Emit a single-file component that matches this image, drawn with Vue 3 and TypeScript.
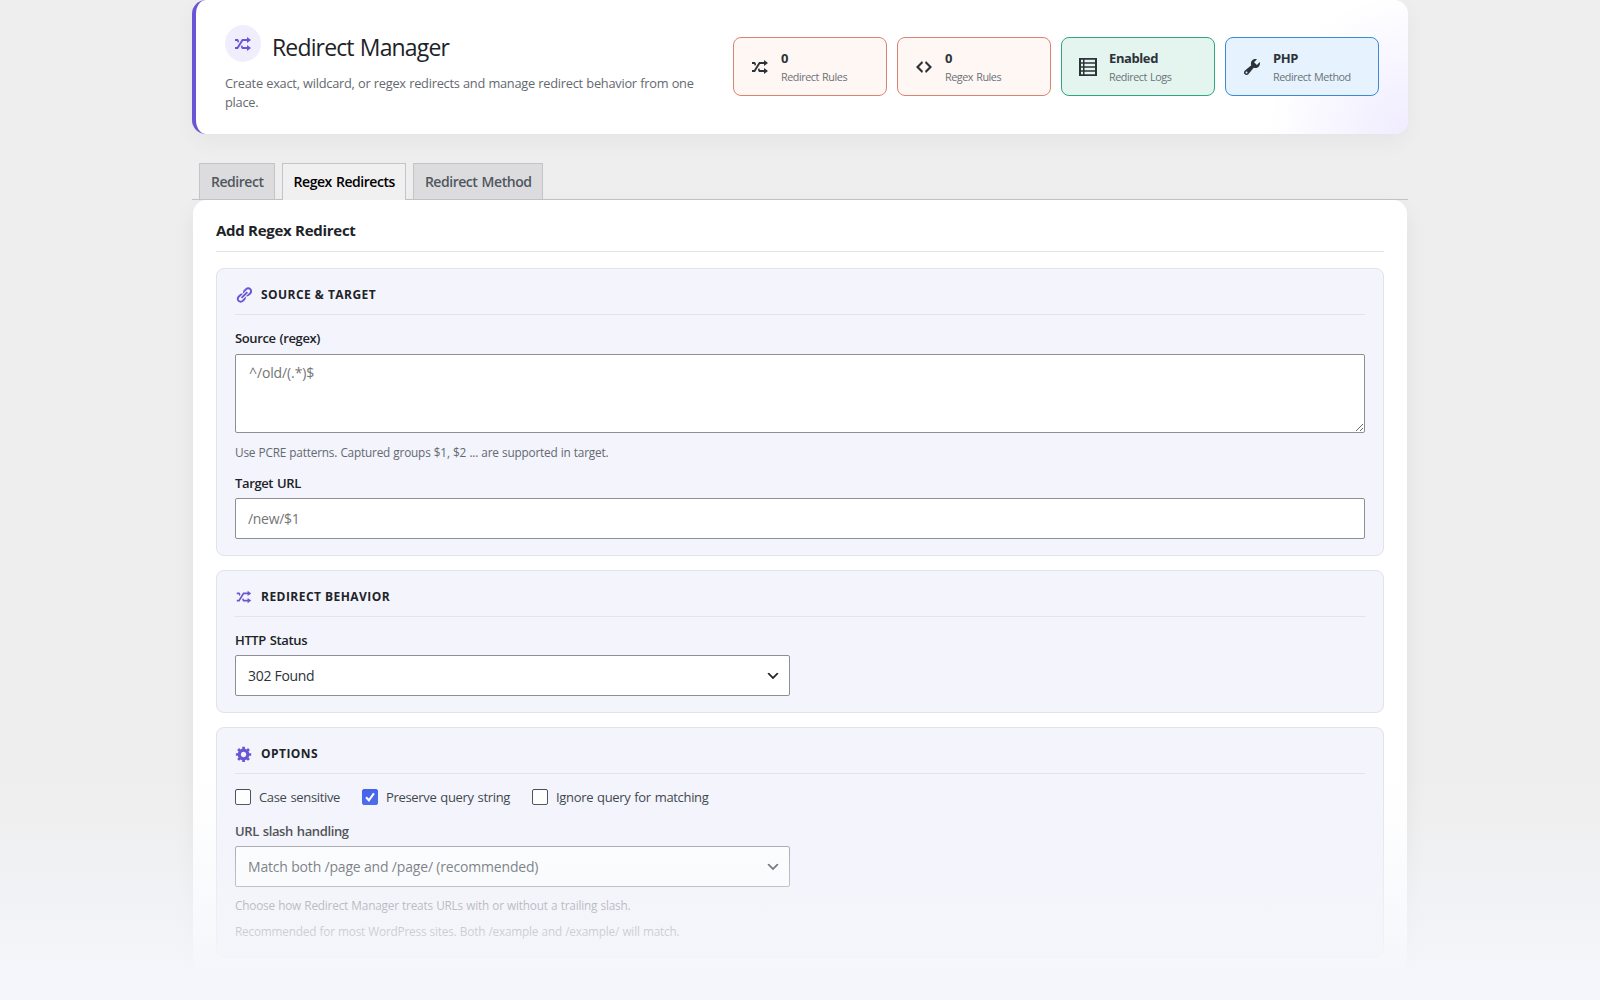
<script setup lang="ts">
import { ref } from 'vue'

const icons = {
  shuffle: 'M18 6.01L14 9V7h-4l-5 8H2v-2h2l5-8h5V3zM2 5h3l1.15 2.17-1.12 1.8L4 7H2V5zm16 9.01L14 17v-2H9l-1.15-2.17 1.12-1.8L10 13h4v-2z',
  code: 'M9 6l-4 4 4 4-1 2-6-6 6-6zm2 8l4-4-4-4 1-2 6 6-6 6z',
  list: 'M1 1h18v18H1zM3 2.8v2.400h2V2.800zm3.500 0v2.400H17V2.800zM3 6.800v2.400h2V6.800zm3.500 0v2.400H17V6.800zM3 10.800v2.400h2v-2.400zm3.500 0v2.400H17v-2.400zM3 14.800v2.400h2v-2.400zm3.500 0v2.400H17v-2.400z',
  wrench: 'M16.68 9.77c-1.34 1.34-3.3 1.67-4.95.99l-5.41 6.52c-.99.99-2.59.99-3.58 0s-.99-2.59 0-3.57l6.52-5.42c-.68-1.65-.35-3.61.99-4.95 1.28-1.28 3.12-1.62 4.72-1.06l-2.89 2.89 2.82 2.82 2.86-2.87c.53 1.58.18 3.39-1.08 4.65zM3.81 16.21c.4.39 1.04.39 1.43 0 .4-.4.4-1.04 0-1.43-.39-.4-1.03-.4-1.43 0-.39.39-.39 1.03 0 1.43z',
  link: 'M17.74 2.76c1.68 1.69 1.68 4.41 0 6.1l-1.53 1.52c-1.12 1.12-2.7 1.47-4.14 1.09l2.62-2.61.76-.77.76-.76c.84-.84.84-2.2 0-3.04-.84-.85-2.2-.85-3.04 0l-.77.76-3.38 3.38c-.37-1.44-.02-3.02 1.1-4.14l1.52-1.53c1.69-1.68 4.42-1.68 6.1 0zM8.59 13.43l5.34-5.34c.42-.42.42-1.1 0-1.52-.44-.43-1.13-.39-1.53 0l-5.33 5.34c-.42.42-.42 1.1 0 1.52.44.43 1.13.39 1.52 0zm-.76 2.29l4.14-4.15c.38 1.44.03 3.02-1.09 4.14l-1.52 1.53c-1.69 1.68-4.41 1.68-6.1 0-1.68-1.68-1.68-4.42 0-6.1l1.53-1.52c1.12-1.12 2.7-1.47 4.14-1.1l-4.14 4.15c-.85.84-.85 2.2 0 3.05.84.84 2.2.84 3.04 0z',
  gear: 'M18 12h-2.18c-.17.7-.44 1.35-.81 1.93l1.54 1.54-2.1 2.1-1.54-1.54c-.58.36-1.23.63-1.91.79V19H8v-2.18c-.68-.16-1.33-.43-1.91-.79l-1.54 1.54-2.12-2.12 1.54-1.54c-.36-.58-.63-1.23-.79-1.91H1V9.03h2.17c.16-.7.44-1.35.8-1.94L2.43 5.55l2.1-2.1 1.54 1.54c.58-.37 1.24-.64 1.93-.81V2h3v2.18c.68.16 1.33.43 1.91.79l1.54-1.54 2.12 2.12-1.54 1.54c.36.59.64 1.24.8 1.94H18V12zm-8.5 1.5c1.66 0 3-1.34 3-3s-1.34-3-3-3-3 1.34-3 3 1.34 3 3 3z',
  chevron: 'M5 6l5 5 5-5 2 1-7 7-7-7 2-1z',
}

const stats = [
  { icon: icons.shuffle, value: '0', label: 'Redirect Rules', tone: 'coral' },
  { icon: icons.code, value: '0', label: 'Regex Rules', tone: 'coral' },
  { icon: icons.list, value: 'Enabled', label: 'Redirect Logs', tone: 'green' },
  { icon: icons.wrench, value: 'PHP', label: 'Redirect Method', tone: 'blue' },
]

const tabs = ['Redirect', 'Regex Redirects', 'Redirect Method']
const activeTab = ref(1)

const options = ref([
  { label: 'Case sensitive', checked: false },
  { label: 'Preserve query string', checked: true },
  { label: 'Ignore query for matching', checked: false },
])
</script>

<template>
  <div class="page">
    <header class="hero">
      <div class="intro">
        <div class="title-row">
          <span class="badge"><svg viewBox="0 0 20 20"><path :d="icons.shuffle" /></svg></span>
          <h1>Redirect Manager</h1>
        </div>
        <p>Create exact, wildcard, or regex redirects and manage redirect behavior from one place.</p>
      </div>
      <div class="stats">
        <div v-for="s in stats" :key="s.label" class="stat" :class="s.tone">
          <svg viewBox="0 0 20 20"><path fill-rule="evenodd" :d="s.icon" /></svg>
          <div>
            <strong>{{ s.value }}</strong>
            <span>{{ s.label }}</span>
          </div>
        </div>
      </div>
    </header>

    <nav class="tabs">
      <a v-for="(t, i) in tabs" :key="t" :class="{ active: i === activeTab }" @click="activeTab = i">{{ t }}</a>
    </nav>

    <main class="panel">
      <h2>Add Regex Redirect</h2>

      <section class="group">
        <h3><svg viewBox="0 0 20 20"><path :d="icons.link" /></svg><span>SOURCE &amp; TARGET</span></h3>
        <label class="field-label source">Source (regex)</label>
        <textarea placeholder="^/old/(.*)$"></textarea>
        <p class="help pattern">Use PCRE patterns. Captured groups $1, $2 ... are supported in target.</p>
        <label class="field-label target">Target URL</label>
        <input class="text" type="text" placeholder="/new/$1" />
      </section>

      <section class="group">
        <h3><svg viewBox="0 0 20 20"><path :d="icons.shuffle" /></svg><span>REDIRECT BEHAVIOR</span></h3>
        <label class="field-label">HTTP Status</label>
        <div class="select">
          <span>302 Found</span>
          <svg viewBox="0 0 20 20"><path :d="icons.chevron" /></svg>
        </div>
      </section>

      <section class="group">
        <h3><svg viewBox="0 0 20 20"><path :d="icons.gear" /></svg><span>OPTIONS</span></h3>
        <div class="checks">
          <label v-for="o in options" :key="o.label" @click="o.checked = !o.checked">
            <span class="box" :class="{ on: o.checked }">
              <svg v-if="o.checked" viewBox="0 0 16 16"><path d="M3.5 8.3l3.200 3.500 5.800-8" /></svg>
            </span>
            <span>{{ o.label }}</span>
          </label>
        </div>
        <label class="field-label slash">URL slash handling</label>
        <div class="select">
          <span class="long">Match both /page and /page/ (recommended)</span>
          <svg viewBox="0 0 20 20"><path :d="icons.chevron" /></svg>
        </div>
        <p class="help">Choose how Redirect Manager treats URLs with or without a trailing slash.</p>
        <p class="help second">Recommended for most WordPress sites. Both /example and /example/ will match.</p>
      </section>
    </main>
    <div class="fade"></div>
  </div>
</template>

<style>
body {
  background: #eee;
  overflow: hidden;
}
</style>

<style scoped>
* {
  box-sizing: border-box;
}
.page {
  position: relative;
  height: 1000px;
  overflow: hidden;
  padding: 0 192px;
  background: #eee;
  color: #1d2327;
  font: 13px/20px "Open Sans", "Noto Sans", sans-serif;
}
svg {
  display: block;
  fill: currentColor;
  flex: none;
}
h1, h2, h3, p {
  margin: 0;
}
.hero {
  display: flex;
  height: 134px;
  padding: 25px 29px 0 29px;
  border-left: 4px solid #6a55d4;
  border-radius: 14px;
  background: radial-gradient(circle at 100% 100%, #f0ecff 0, #f3f0ff 30px, rgba(255, 255, 255, 0) 140px), #fff;
  box-shadow: 0 8px 22px rgba(0, 0, 0, 0.04);
}
.intro {
  width: 508px;
}
.title-row {
  display: flex;
  gap: 10px;
}
.badge {
  display: flex;
  align-items: center;
  justify-content: center;
  width: 36px;
  height: 37px;
  border-radius: 50%;
  background: #f0edfd;
  color: #6a55d4;
}
.badge svg {
  width: 20px;
  height: 20px;
}
h1 {
  padding: 6px 0 0 1px;
  font-size: 23px;
  line-height: 32px;
  font-weight: 400;
  letter-spacing: -0.85px;
  word-spacing: 1px;
}
.intro p {
  width: 480px;
  margin-top: 11px;
  color: #646970;
  font-size: 12.8px;
  line-height: 19px;
  letter-spacing: -0.25px;
  word-spacing: 0.3px;
}
.stats {
  display: flex;
  gap: 10px;
  padding-top: 12px;
}
.stat {
  display: flex;
  align-items: center;
  gap: 11px;
  width: 154px;
  height: 59px;
  padding: 1px 16px 0;
  border: 1px solid #d98472;
  border-radius: 8px;
  background: #fef7f4;
}
.stat.green {
  border-color: #2fa583;
  background: #e4f5f0;
}
.stat.blue {
  border-color: #3a8bd2;
  background: #e6f2fd;
}
.stat svg {
  width: 20px;
  height: 20px;
  color: #2c3338;
}
.stat strong,
.stat div span {
  display: block;
  white-space: nowrap;
}
.stat strong {
  font-size: 13px;
  line-height: 19px;
  letter-spacing: -0.4px;
  color: #2c3338;
}
.stat div span {
  font-size: 10.8px;
  line-height: 18px;
  letter-spacing: -0.45px;
  word-spacing: 0.8px;
  color: #6c7278;
}
.tabs {
  display: flex;
  gap: 7px;
  height: 37px;
  margin-top: 29px;
  padding-left: 7px;
  border-bottom: 1px solid #c3c4c7;
}
.tabs a {
  height: 36px;
  padding: 0 10px 0 11px;
  border: 1px solid #c3c4c7;
  border-bottom: 0;
  background: #dcdcde;
  color: #50575e;
  font-size: 14px;
  font-weight: 600;
  line-height: 35px;
  letter-spacing: -0.46px;
  word-spacing: 1px;
}
.tabs a.active {
  height: 37px;
  background: #f0f0f1;
  color: #000;
}
.panel {
  height: 860px;
  margin: 0 1px;
  padding: 15px 23px 0;
  border-radius: 14px 14px 0 0;
  background: #fff;
  box-shadow: 0 8px 22px rgba(0, 0, 0, 0.06);
}
h2 {
  height: 37px;
  border-bottom: 1px solid #e2e4e7;
  font-size: 15px;
  line-height: 31px;
  font-weight: 700;
  letter-spacing: -0.28px;
  margin-bottom: 16px;
}
.group {
  margin-bottom: 14px;
  padding: 13px 18px 16px;
  border: 1px solid #e0e3ea;
  border-radius: 8px;
  background: #f3f4fc;
}
h3 {
  display: flex;
  align-items: center;
  gap: 8px;
  height: 33px;
  margin-bottom: 13px;
  padding-bottom: 7px;
  border-bottom: 1px solid #e2e4ea;
  font-size: 12px;
  line-height: 20px;
  font-weight: 700;
  letter-spacing: 0.46px;
}
h3 svg {
  width: 18px;
  height: 18px;
  color: #6a55d4;
}
.field-label {
  display: block;
  height: 25px;
  font-size: 13px;
  font-weight: 600;
  line-height: 20px;
  letter-spacing: -0.37px;
  word-spacing: 0.8px;
}
.field-label.source {
  height: 26px;
}
textarea,
.text,
.select {
  display: block;
  border: 1px solid #8c8f94;
  border-radius: 2px;
  background: #fff;
  font: 14px/20px "Open Sans", "Noto Sans", sans-serif;
  letter-spacing: -0.3px;
}
textarea {
  width: 100%;
  height: 79px;
  padding: 8px 13px;
  letter-spacing: -0.12px;
}
textarea::placeholder,
.text::placeholder {
  color: #757575;
}
.text {
  width: 100%;
  height: 41px;
  padding: 0 12px;
}
.help {
  margin-top: 8px;
  color: #646970;
  font-size: 11.8px;
  line-height: 20px;
  letter-spacing: -0.2px;
  word-spacing: 0.4px;
}
.help.pattern {
  margin-top: 9px;
}
.help.second {
  margin-top: 6px;
}
.target {
  margin-top: 11px;
}
.select {
  display: flex;
  align-items: center;
  justify-content: space-between;
  width: 555px;
  height: 41px;
  padding: 0 8px 0 12px;
  color: #2c3338;
}
.select .long {
  letter-spacing: -0.18px;
}
.select svg {
  width: 16px;
  height: 16px;
  color: #1d2327;
}
.checks {
  display: flex;
  gap: 22px;
}
.checks label {
  display: flex;
  align-items: center;
  gap: 8px;
  letter-spacing: -0.34px;
  word-spacing: 0.9px;
  color: #2c3338;
}
.box {
  width: 16px;
  height: 16px;
  border: 1px solid #3c434a;
  border-radius: 2px;
  background: #fff;
}
.box.on {
  border-color: #3858e9;
  background: #3858e9;
}
.box svg {
  width: 14px;
  height: 14px;
  fill: none;
  stroke: #fff;
  stroke-width: 2.4;
}
.slash {
  margin-top: 14px;
}
.fade {
  position: absolute;
  inset: 770px 0 0;
  pointer-events: none;
  background: linear-gradient(rgba(244, 246, 251, 0), rgba(244, 246, 251, 0.22) 61px, rgba(244, 246, 251, 0.4) 96px, rgba(244, 246, 251, 0.58) 134px, rgba(244, 246, 251, 0.7) 160px, #f4f6fb 205px);
}
</style>
